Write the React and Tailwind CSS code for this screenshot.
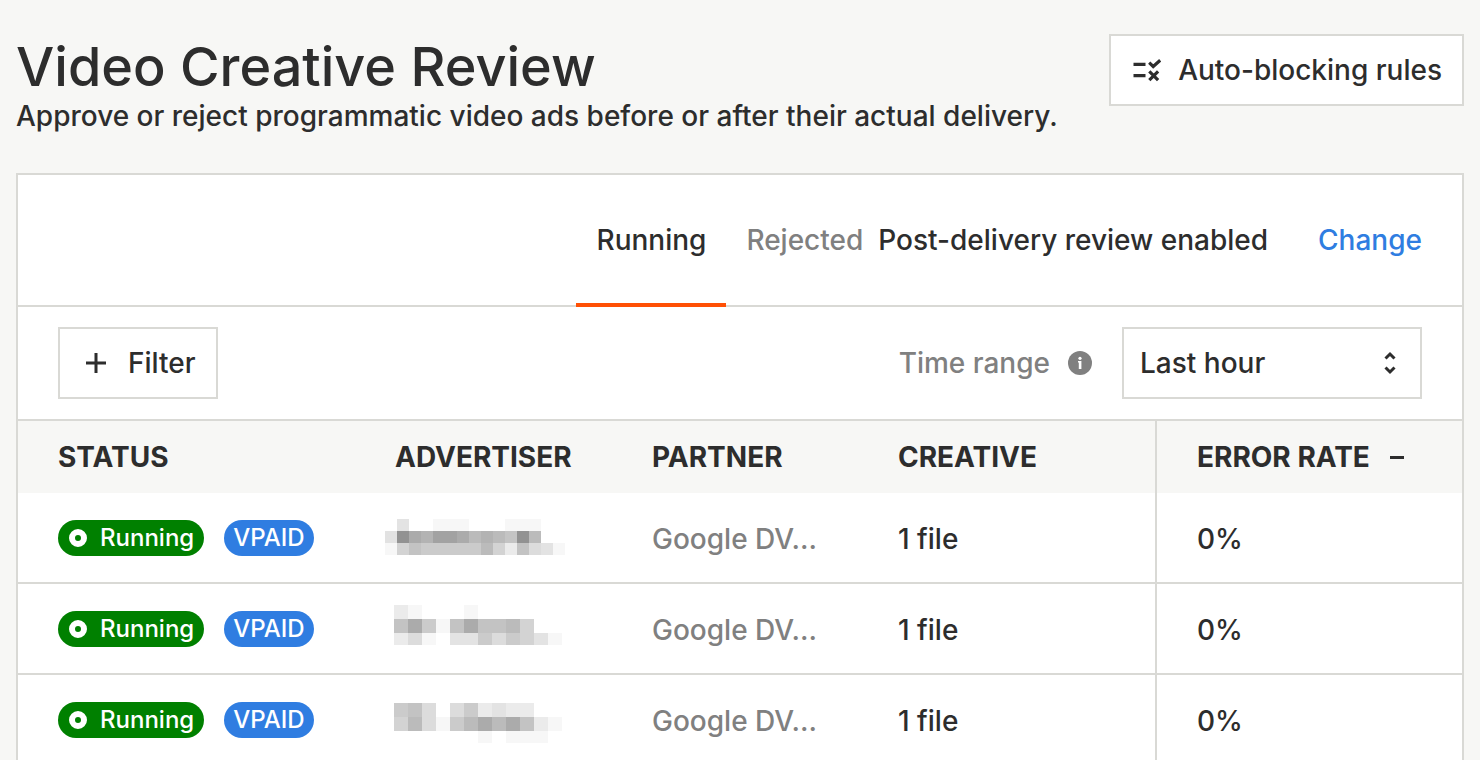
import React, { useState } from 'react'

// blurred advertiser names, one shade per block ('..' is an empty block)
const rows = [
  {
    id: 1, partner: 'Google DV...', files: '1 file', errorRate: '0%',
    mosaic: { x: 0, y: 7, size: 12, lines: [
      '.. e3 .. .. f7 f7 f7 .. .. .. f7 f7 f7',
      'e2 92 ab b3 a2 a2 ab bb b3 bb c4 92 bb',
      'f7 d3 c3 cb cb cb cb cb bb d3 eb c3 dc e3 f7',
    ] },
  },
  {
    id: 2, partner: 'Google DV...', files: '1 file', errorRate: '0%',
    mosaic: { x: 9, y: 2, size: 14, lines: [
      'eb f7 .. .. .. f7',
      'c3 ab cb f7 c3 ab c3 c3 bb d3',
      'eb dc f7 .. e3 e3 cb dc cb d3 e3 f7',
    ] },
  },
  {
    id: 3, partner: 'Google DV...', files: '1 file', errorRate: '0%',
    mosaic: { x: 9, y: 9, size: 14, lines: [
      'cb c3 dc .. dc cb eb e3 eb eb',
      'd3 bb dc f7 cb bb ab bb ab c3 eb f7',
      '.. .. .. .. .. .. f7 .. f7 f7 f7',
    ] },
  },
]

function Mosaic({ x, y, size, lines }){
  return (
    <svg width="184" height="51" shapeRendering="crispEdges" aria-hidden="true">
      {lines.map((line, r) => line.split(' ').map((c, i) => c === '..' ? null : (
        <rect key={r + '-' + i} x={x + i * size} y={y + r * size} width={size} height={r === 2 ? 12 : size} fill={`#${c}${c}${c}`} />
      )))}
    </svg>
  )
}

function RulesIcon(){
  return (
    <svg width="28" height="28" viewBox="0 0 28 28" fill="none" stroke="currentColor" strokeWidth="3.2" aria-hidden="true">
      <path d="M0.5 8.3H12.5M0.5 19.6H12.5" />
      <path d="M16.2 6.7L20.2 10.5L27.2 4.3M16.3 15.3L25.1 24.1M25.1 15.3L16.3 24.1" />
    </svg>
  )
}

function PlusIcon(){
  return (
    <svg width="28" height="28" viewBox="0 0 28 28" stroke="currentColor" strokeWidth="3" aria-hidden="true">
      <path d="M4 14H24M14 4V24" />
    </svg>
  )
}

function InfoIcon(){
  return (
    <svg width="24" height="24" viewBox="0 0 24 24" aria-hidden="true">
      <circle cx="12" cy="12" r="12" fill="#808080" />
      <path d="M10 10H13.4V18H10.8V11.6H10Z" fill="#fff" />
      <circle cx="12" cy="7.3" r="1.6" fill="#fff" />
    </svg>
  )
}

export default function App(){
  const [tab, setTab] = useState('running')
  const [range, setRange] = useState('hour')

  return (
    <div className="h-screen overflow-hidden bg-[#f7f7f5] px-4 font-['Inter',sans-serif] text-[28px] leading-9 text-[#2d2d2d]">
      <header className="flex items-start justify-between pt-[34px]">
        <div>
          <h1 className="pt-0.5 text-[54px] leading-[62px] font-medium">Video Creative Review</h1>
          <p className="font-medium">Approve or reject programmatic video ads before or after their actual delivery.</p>
        </div>
        <button className="flex h-[72px] items-center gap-[17px] border-2 border-[#d9d9d5] bg-white pr-5 pl-[22px] font-medium">
          <RulesIcon />
          Auto-blocking rules
        </button>
      </header>

      <main className="mt-[39px] border-2 border-[#d9d9d5] bg-white">
        <div className="flex h-[132px] items-stretch justify-end border-b-2 border-[#d9d9d5] px-10 font-medium">
          <button
            onClick={()=>setTab('running')}
            className={tab === 'running' ? '-mb-0.5 border-b-4 border-[#ff5005] px-5 pt-0.5' : '-mb-0.5 border-b-4 border-transparent px-5 pt-0.5 text-[#808080]'}
          >
            Running
          </button>
          <button
            onClick={()=>setTab('rejected')}
            className={tab === 'rejected' ? '-mb-0.5 border-b-4 border-[#ff5005] pt-0.5 pr-[15px] pl-5' : '-mb-0.5 border-b-4 border-transparent pt-0.5 pr-[15px] pl-5 text-[#808080]'}
          >
            Rejected
          </button>
          <span className="self-center">Post-delivery review enabled</span>
          <a href="#change" className="ml-[50px] self-center text-[#2f7de1]">Change</a>
        </div>

        <div className="flex items-center justify-between border-b-2 border-[#d9d9d5] px-10 py-5 font-medium">
          <button className="flex h-[72px] items-center gap-[18px] border-2 border-[#d9d9d5] pr-5 pl-[22px]">
            <PlusIcon />
            Filter
          </button>
          <div className="flex items-center">
            <label htmlFor="range" className="text-[#808080]">Time range</label>
            <span className="mr-[30px] ml-[18px]"><InfoIcon /></span>
            <div className="relative">
              <select
                id="range"
                value={range}
                onChange={e => setRange(e.target.value)}
                className="h-[72px] w-[300px] appearance-none border-2 border-[#d9d9d5] bg-white pl-4"
              >
                <option value="hour">Last hour</option>
                <option value="day">Last day</option>
              </select>
              <svg className="pointer-events-none absolute top-6 right-5" width="24" height="24" viewBox="0 0 24 24" fill="none" stroke="currentColor" strokeWidth="3" aria-hidden="true">
                <path d="M7.5 7.5L12 3L16.5 7.5M7.5 16.5L12 21L16.5 16.5" />
              </svg>
            </div>
          </div>
        </div>

        <table className="w-full table-fixed border-separate border-spacing-0 text-left">
          <colgroup>
            <col className="w-[367px]" />
            <col className="w-[267px]" />
            <col className="w-[246px]" />
            <col className="w-[259px]" />
            <col />
          </colgroup>
          <thead>
            <tr className="h-[72px] bg-[#f7f7f5]">
              <th className="pl-10">STATUS</th>
              <th className="pl-2.5">ADVERTISER</th>
              <th>PARTNER</th>
              <th className="border-r-2 border-[#d9d9d5]">CREATIVE</th>
              <th className="pl-10">
                <button className="flex items-center gap-5">
                  ERROR RATE
                  <span className="h-[3px] w-3.5 bg-[#2d2d2d]" />
                </button>
              </th>
            </tr>
          </thead>
          <tbody className="font-medium">
            {rows.map(r => (
              <tr key={r.id} className="h-[91px]">
                <td className="border-b-2 border-[#d9d9d5] pl-10">
                  <div className="flex items-center gap-5 text-2xl text-white">
                    <span className="flex h-9 items-center gap-3 rounded-full bg-[#008000] px-2.5">
                      <svg width="20" height="20" viewBox="0 0 20 20" aria-hidden="true">
                        <circle cx="10" cy="10" r="6" fill="none" stroke="#fff" strokeWidth="6" />
                      </svg>
                      Running
                    </span>
                    <span className="flex h-9 items-center rounded-full bg-[#2f7de1] px-[9px]">VPAID</span>
                  </div>
                </td>
                <td className="border-b-2 border-[#d9d9d5]"><Mosaic {...r.mosaic} /></td>
                <td className="border-b-2 border-[#d9d9d5] pt-0.5 text-[#808080]">{r.partner}</td>
                <td className="border-r-2 border-b-2 border-[#d9d9d5] pt-0.5">{r.files}</td>
                <td className="border-b-2 border-[#d9d9d5] pt-0.5 pl-10">{r.errorRate}</td>
              </tr>
            ))}
          </tbody>
        </table>
      </main>
    </div>
  )
}
